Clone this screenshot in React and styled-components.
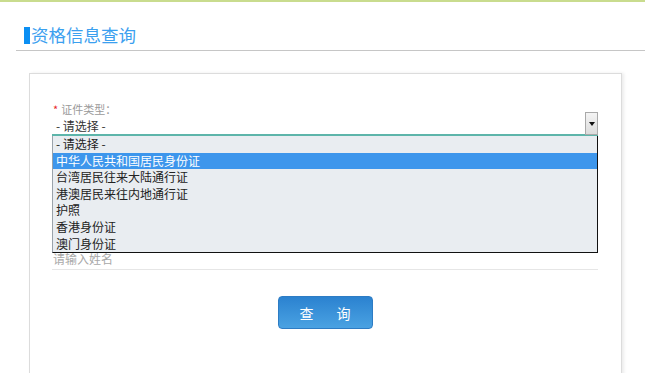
import React from 'react'
import styled, { createGlobalStyle } from 'styled-components'

const options = [
  '- 请选择 -',
  '中华人民共和国居民身份证',
  '台湾居民往来大陆通行证',
  '港澳居民来往内地通行证',
  '护照',
  '香港身份证',
  '澳门身份证',
]

const GlobalStyle = createGlobalStyle`
  body {
    margin: 0;
    background: #fff;
    font-family: "Noto Sans CJK SC", "Noto Sans", sans-serif;
    overflow: hidden;
  }
`

const TopLine = styled.div`
  height: 2px;
  background: #c9dc8e;
`

const Header = styled.div`
  margin: 22px 0 0 16px;
  padding: 0 0 4px 8px;
  border-bottom: 1px solid #c6c6c6;
`

const Title = styled.h2`
  margin: 0;
  display: flex;
  align-items: center;
  font-size: 17.5px;
  font-weight: normal;
  line-height: 22px;
  color: #3ba0ef;
  &::before {
    content: '';
    width: 6px;
    height: 17px;
    margin-right: 1px;
    background: #0b8ff3;
  }
`

const Card = styled.div`
  margin: 22px 23px 0 29px;
  min-height: 320px;
  border: 1px solid #dcdcdc;
  box-shadow: 2px 0 3px rgba(0, 0, 0, 0.08);
  padding: 27px 23px 0 22px;
`

const Field = styled.div`
  position: relative;
  margin-top: ${p => p.$gap || 0}px;
`

const Label = styled.div`
  font-size: 11px;
  line-height: 16px;
  color: #9a9a9a;
  padding-left: 1px;
  span {
    color: #e8262a;
    margin-right: 3px;
  }
`

const SelectBox = styled.div`
  display: flex;
  align-items: center;
  height: 17px;
  border-bottom: 2px solid #5db5aa;
  font-size: 12px;
  color: #333;
  padding-left: 4px;
`

const SelectText = styled.div`
  flex: 1;
`

const Arrow = styled.div`
  align-self: flex-end;
  width: 11px;
  height: 21px;
  margin-bottom: -1px;
  border: 1px solid #a9a9a9;
  background: linear-gradient(#f4f4f4, #dcdcdc);
  display: flex;
  align-items: center;
  justify-content: center;
  &::after {
    content: '';
    border-left: 3px solid transparent;
    border-right: 3px solid transparent;
    border-top: 4px solid #111;
  }
`

const List = styled.ul`
  position: absolute;
  left: 0;
  right: 0;
  top: 100%;
  z-index: 2;
  margin: 0;
  padding: 0;
  list-style: none;
  background: #e9edf1;
  border-left: 1px solid #9aa3ab;
  border-right: 1px solid #111;
  border-bottom: 1px solid #111;
`

const Option = styled.li`
  font-size: 12px;
  line-height: 16.6px;
  padding-left: 3px;
  white-space: nowrap;
  color: ${p => (p.$active ? '#fff' : '#222')};
  background: ${p => (p.$active ? '#3d96ec' : 'transparent')};
`

const Input = styled.input`
  display: block;
  width: 100%;
  box-sizing: border-box;
  border: none;
  border-bottom: 1px solid #e6e6e6;
  outline: none;
  padding: 0 0 1px 1px;
  height: 21px;
  font-family: inherit;
  font-size: 12px;
  background: transparent;
  &::placeholder {
    color: #a8a8a8;
  }
`

const Actions = styled.div`
  display: flex;
  justify-content: center;
  margin-top: 26px;
`

const Button = styled.button`
  width: 95px;
  height: 33px;
  border: 1px solid #2d7cc4;
  border-radius: 4px;
  background: linear-gradient(#2b82d0, #4aa2e2);
  color: #fff;
  font-family: inherit;
  font-size: 14px;
  display: flex;
  align-items: center;
  justify-content: center;
  gap: 23px;
  padding: 0;
  white-space: nowrap;
  cursor: pointer;
`

export default function App() {
  return (
    <>
      <GlobalStyle />
      <TopLine />
      <Header>
        <Title>资格信息查询</Title>
      </Header>
      <Card>
        <Field>
          <Label>
            <span>*</span>证件类型：
          </Label>
          <SelectBox>
            <SelectText>- 请选择 -</SelectText>
            <Arrow />
          </SelectBox>
          <List>
            {options.map((o, i) => (
              <Option key={o} $active={i === 1}>
                {o}
              </Option>
            ))}
          </List>
        </Field>
        <Field $gap={113}>
          <Input placeholder="请输入姓名" />
        </Field>
        <Actions>
          <Button>
            <span>查</span>
            <span>询</span>
          </Button>
        </Actions>
      </Card>
    </>
  )
}
